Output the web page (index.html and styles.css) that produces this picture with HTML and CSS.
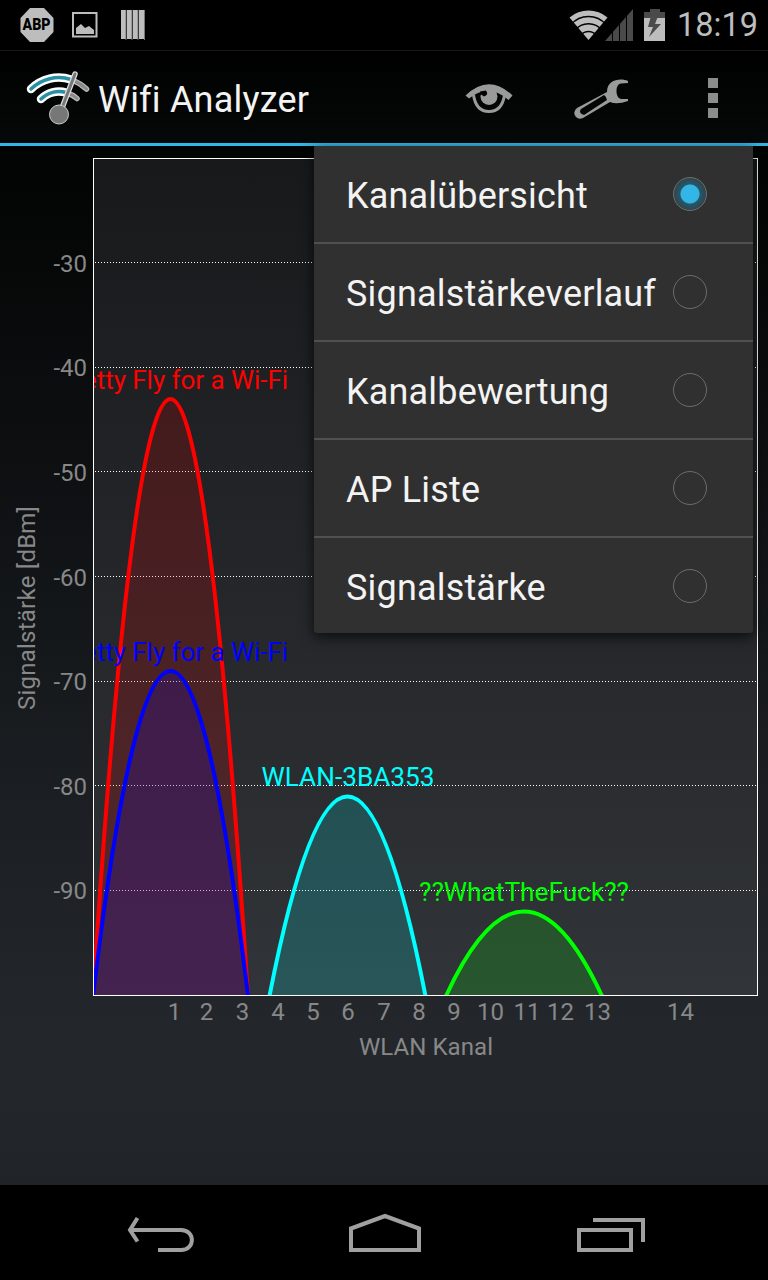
FILE: index.html
```html
<!DOCTYPE html>
<html lang="de">
<head>
    <meta charset="UTF-8">
    <meta name="viewport" content="width=device-width, initial-scale=1.0">
    <title>Wifi Analyzer</title>
    <link rel="stylesheet" href="styles.css">
</head>
<body>
    <div class="screen">
        <!-- Status bar -->
        <div class="statusbar">
            <div class="notifications">
                <svg width="34" height="34" viewBox="20 8 34 34">
                    <polygon class="lightgray" points="30,8 44,8 53.5,18 53.5,32 44,42 30,42 20.500,32 20.500,18"/>
                    <text class="abp" x="36.500" y="30" text-anchor="middle" textLength="28" lengthAdjust="spacingAndGlyphs">ABP</text>
                </svg>
                <svg width="26" height="26" viewBox="72 12 26 26">
                    <rect x="73" y="13" width="23.500" height="23.500" fill="none" stroke="#bdbdbd" stroke-width="2"/>
                    <path class="lightgray" d="M76 34v-6l5-4 4 4 4-2 5 4v4z"/>
                </svg>
                <svg width="24" height="30" viewBox="121 10 24 30">
                    <path class="lightgray" d="M121 10h5v29h-5zM127 10h5v29h-5zM133 10h5v29h-5zM139 10h5v29h-5z"/>
                    <path d="M126 10v30M132 10v30M138 10v30M144.500 10v30" stroke="#777" fill="none"/>
                </svg>
            </div>
            <div class="system">
                <svg width="96" height="34" viewBox="569 7 96 34">
                    <path class="lightgray" d="M588.500 39L569.500 16.500A29.500 29.500 0 0 1 607.500 16.500z"/>
                    <path d="M571 23.500A23 23 0 0 1 606 23.500M575 29.500A17 17 0 0 1 602 29.500M581 34A10 10 0 0 1 596 34" fill="none" stroke="#000" stroke-width="1.500"/>
                    <path fill="#4a4a4a" d="M605 40L633 8V40z"/>
                    <path d="M612.500 8v33M619.500 8v33M626.500 8v33" stroke="#000" fill="none"/>
                    <path fill="#4a4a4a" d="M650 8h10v3h5v6h-21v-6h6z"/>
                    <path class="lightgray" d="M644 17h21v23h-21z"/>
                    <path fill="#4a4a4a" d="M651 15h7l-3 8h6l-12 13 4-10h-5z"/>
                </svg>
                <span class="clock">18:19</span>
            </div>
        </div>

        <!-- Action bar -->
        <div class="actionbar">
            <svg class="logo" width="64" height="56" viewBox="26 69 64 56">
                <g fill="none" stroke-linecap="round">
                    <path d="M73 80.500A40 40 0 0 1 86.500 89M67 93A26 26 0 0 1 77 98.500" stroke="#bbb" stroke-width="5.500"/>
                    <path d="M73 80.500A40 40 0 0 1 86.500 89M67 93A26 26 0 0 1 77 98.500" stroke="#8a8a8a" stroke-width="3"/>
                    <path d="M31 89A40 40 0 0 1 71 79.500M41 99A26 26 0 0 1 66 92.500" stroke="#fff" stroke-width="8.500"/>
                    <path d="M31 89A40 40 0 0 1 71 79.500M41 99A26 26 0 0 1 66 92.500" stroke="#2791a3" stroke-width="3.500"/>
                    <path d="M75 74L62 108" stroke="#ddd" stroke-width="5.500"/>
                    <path d="M75 74L62 108" stroke="#777" stroke-width="3"/>
                </g>
                <circle cx="59" cy="114.500" r="9.500" fill="#777" stroke="#ccc"/>
            </svg>
            <h1>Wifi Analyzer</h1>
            <div class="actions">
                <svg width="48" height="30" viewBox="465 85 48 30">
                    <path fill="#9a9a9a" d="M465.500 96.500Q489 74 512.500 96.500L508.500 101Q489 84 469 99.500z"/>
                    <path d="M473.500 96Q476 112.500 489 112.500T504.500 96" fill="none" stroke="#9a9a9a" stroke-width="3"/>
                    <circle cx="489" cy="97.500" r="8.500" fill="#9a9a9a"/>
                    <path fill="#000" d="M480 92.500L486 91.500Q489 96 484 97.500L480.500 95z"/>
                </svg>
                <svg width="56" height="42" viewBox="573 77 56 42">
                    <path fill="#9a9a9a" fill-rule="evenodd" d="M628 82V80C621 77 607 78 607 91L577 107Q572 111 576 116Q579 119 583 117L610 101Q617 104 628 100V98H621C615 97 615 83 621 82.500zM604 94Q606 95 607 99L584 114Q578 112 581 108z"/>
                </svg>
                <svg width="10" height="42" viewBox="0 0 10 42">
                    <path fill="#8c8c8c" d="M0 0h10v10H0zM0 15h10v10H0zM0 30h10v10H0z"/>
                </svg>
            </div>
        </div>

        <!-- Channel graph -->
        <div class="content">
            <svg class="graph" width="768" height="1039" viewBox="0 146 768 1039">
                <defs>
                    <linearGradient id="plotBg" x1="0" y1="0" x2="0" y2="1">
                        <stop offset="0" stop-color="#17191b"/>
                        <stop offset="0.500" stop-color="#242629"/>
                        <stop offset="1" stop-color="#313438"/>
                    </linearGradient>
                    <clipPath id="plotClip"><rect x="94" y="159" width="663" height="836"/></clipPath>
                </defs>
                <rect x="93.500" y="158.500" width="664" height="837" fill="url(#plotBg)" stroke="#fff"/>
                <path class="grid" d="M95 262.500H757M95 367.500H757M95 471.500H757M95 576.500H757M95 681.500H757M95 785.500H757M95 890.500H757"/>
                <g clip-path="url(#plotClip)">
                    <path class="curve red" d="M93 996Q170.500 -198 248 996"/>
                    <path class="curve blue" d="M93 996Q170.500 346 248 996"/>
                    <path class="curve cyan" d="M269.500 996Q347.500 597 425.500 996"/>
                    <path class="curve green" d="M446 996Q524 827 602 996"/>
                    <g class="ssid">
                        <text x="83" y="389" fill="#f00" textLength="205" lengthAdjust="spacingAndGlyphs">etty Fly for a Wi-Fi</text>
                        <text x="83" y="661" fill="#00f" textLength="205" lengthAdjust="spacingAndGlyphs">etty Fly for a Wi-Fi</text>
                        <text x="348" y="786" fill="#0ff" text-anchor="middle" textLength="173" lengthAdjust="spacingAndGlyphs">WLAN-3BA353</text>
                        <text x="524" y="901" fill="#0f0" text-anchor="middle" textLength="210" lengthAdjust="spacingAndGlyphs">??WhatTheFuck??</text>
                    </g>
                </g>
                <g class="axis" text-anchor="end">
                    <text x="87" y="272">-30</text>
                    <text x="87" y="376">-40</text>
                    <text x="87" y="481">-50</text>
                    <text x="87" y="586">-60</text>
                    <text x="87" y="690">-70</text>
                    <text x="87" y="795">-80</text>
                    <text x="87" y="899">-90</text>
                </g>
                <g class="axis" text-anchor="middle">
                    <text x="174.500" y="1020">1</text>
                    <text x="206.500" y="1020">2</text>
                    <text x="242.500" y="1020">3</text>
                    <text x="278" y="1020">4</text>
                    <text x="313" y="1020">5</text>
                    <text x="348" y="1020">6</text>
                    <text x="384" y="1020">7</text>
                    <text x="419" y="1020">8</text>
                    <text x="454" y="1020">9</text>
                    <text x="490.500" y="1020">10</text>
                    <text x="527" y="1020">11</text>
                    <text x="560.500" y="1020">12</text>
                    <text x="597.500" y="1020">13</text>
                    <text x="680.500" y="1020">14</text>
                    <text x="426" y="1055" textLength="134">WLAN Kanal</text>
                    <text transform="translate(35 608) rotate(-90)" textLength="204">Signalstärke [dBm]</text>
                </g>
            </svg>

            <!-- View menu -->
            <ul class="menu">
                <li><span class="label">Kanalübersicht</span><span class="radio checked"></span></li>
                <li><span class="label">Signalstärkeverlauf</span><span class="radio"></span></li>
                <li><span class="label">Kanalbewertung</span><span class="radio"></span></li>
                <li><span class="label">AP Liste</span><span class="radio"></span></li>
                <li><span class="label">Signalstärke</span><span class="radio"></span></li>
            </ul>
        </div>

        <!-- Navigation bar -->
        <div class="navbar">
            <svg width="68" height="40" viewBox="127 1213 68 40">
                <path d="M137.500 1218L130 1230L137.500 1241.500M130 1230H181C195.500 1230 195.500 1250 181 1250H158"/>
            </svg>
            <svg width="72" height="40" viewBox="349 1213 72 40">
                <path d="M351 1228.500L385 1216L419 1228.500V1250H351z"/>
            </svg>
            <svg width="72" height="40" viewBox="577 1213 72 40">
                <path d="M579 1230H631V1250H579zM593 1220H643V1242"/>
            </svg>
        </div>
    </div>
</body>
</html>
```
FILE: styles.css
```css
body {
    margin: 0;
    background: #000;
    font-family: Roboto, sans-serif;
    color: #f3f3f3;
}
.screen {
    width: 768px;
    height: 1280px;
    display: flex;
    flex-direction: column;
    overflow: hidden;
}
svg {
    display: block;
    flex: none;
}
.lightgray {
    fill: #bdbdbd;
}

/* Status bar */
.statusbar {
    height: 50px;
    display: flex;
    justify-content: space-between;
    align-items: center;
    padding: 0 11px 0 20px;
    border-bottom: 1px solid #181818;
}
.notifications {
    display: flex;
    align-items: center;
    gap: 18px;
}
.notifications svg:last-child {
    margin-left: 5px;
}
.abp {
    font-size: 16px;
    font-weight: 900;
}
.system {
    display: flex;
    align-items: center;
    gap: 12px;
}
.clock {
    font-size: 32.5px;
    color: #bdbdbd;
    width: 80px;
    white-space: nowrap;
}

/* Action bar */
.actionbar {
    height: 92px;
    display: flex;
    align-items: center;
    padding: 0 50px 0 26px;
    background: linear-gradient(#000, #060909);
    border-bottom: 3px solid #33b5e5;
}
h1 {
    margin: 0 0 0 8px;
    padding-top: 6px;
    font-size: 36px;
    font-weight: 400;
    letter-spacing: 0.2px;
}
.actions {
    margin-left: auto;
    padding-top: 3px;
    display: flex;
    align-items: center;
}
.actions svg:nth-child(2) {
    margin: 0 79px 0 60px;
}

/* Graph */
.content {
    position: relative;
    height: 1039px;
    background: linear-gradient(#020403 0%, #0d0f11 30%, #1c2024 65%, #23272c 85%, #23272c 92%, #202428 100%);
}
.grid {
    stroke: #fff;
    stroke-dasharray: 1 2;
}
.curve {
    stroke-width: 4;
    fill-opacity: 0.17;
}
.red {
    stroke: #f00;
    fill: #f00;
}
.blue {
    stroke: #00f;
    fill: #00f;
}
.cyan {
    stroke: #0ff;
    fill: #0ff;
}
.green {
    stroke: #0f0;
    fill: #0f0;
}
.ssid {
    font-size: 25px;
}
.axis {
    font-size: 24px;
    fill: #888;
}

/* Menu */
.menu {
    position: absolute;
    top: 0;
    right: 15px;
    width: 439px;
    height: 487px;
    margin: 0;
    padding: 0;
    list-style: none;
    background: #303030;
    border-radius: 0 0 3px 3px;
    box-shadow: 0 4px 14px rgba(0, 0, 0, 0.7);
}
.menu li {
    height: 96px;
    display: flex;
    align-items: center;
    justify-content: space-between;
    padding: 0 46px 0 32px;
    font-size: 36px;
    letter-spacing: 0.18px;
    border-bottom: 2px solid #505050;
}
.menu li:last-child {
    border-bottom: none;
}
.label {
    padding-top: 4px;
}
.radio {
    width: 34px;
    height: 34px;
    box-sizing: border-box;
    border: 1px solid #6c6c6c;
    border-radius: 50%;
}
.checked {
    background: radial-gradient(circle, #33b5e5 0, #33b5e5 9px, #24586a 10px, #334247 17px);
}

/* Navigation */
.navbar {
    height: 95px;
    display: flex;
    align-items: center;
    justify-content: space-between;
    padding: 0 119px 0 127px;
}
.navbar svg:nth-child(2) {
    margin-left: -2px;
}
.navbar path {
    fill: none;
    stroke: #a0a0a0;
    stroke-width: 4;
}
```
